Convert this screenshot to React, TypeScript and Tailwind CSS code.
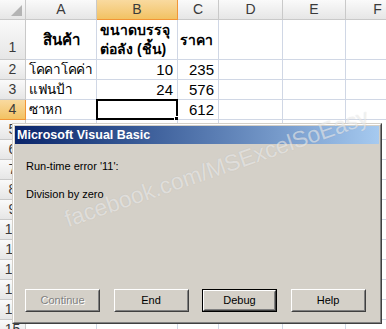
import React from "react"

const cols = ["A", "B", "C", "D", "E", "F"]

const hdr = "border-r border-b border-[#c9c9c9] bg-gradient-to-b from-[#fafafa] to-[#e6e6e6] text-[#3a3a3a]"
const hdrSel = "border-r border-b border-[#f29536] bg-gradient-to-b from-[#f9da9f] to-[#f2c262] text-[#3a3a3a]"
const cell = "border-r border-b border-[#d0d7e5] bg-white"

type Row = { n: number; cells: React.ReactNode[] }

const th = "pl-[3px] text-[13.5px] tracking-[-0.3px]"
const num = "block text-right pr-[4px] text-[15px]"

const rows: Row[] = [
    {
        n: 1,
        cells: [
            <div className="h-full flex items-center justify-center text-[15px] font-bold">สินค้า</div>,
            <div className="h-full flex flex-col justify-center pl-[3px] text-[14px] font-bold leading-[19px]">
                <span>ขนาดบรรจุ</span>
                <span>ต่อลัง (ชิ้น)</span>
            </div>,
            <div className="h-full flex items-center pl-[2px] text-[14px] font-bold">ราคา</div>,
            null, null, null,
        ],
    },
    { n: 2, cells: [<span className={th}>โคคาโคค่า</span>, <span className={num}>10</span>, <span className={num}>235</span>, null, null, null] },
    { n: 3, cells: [<span className={th}>แฟนป้า</span>, <span className={num}>24</span>, <span className={num}>576</span>, null, null, null] },
    { n: 4, cells: [<span className={th}>ซาหก</span>, null, <span className={num}>612</span>, null, null, null] },
]
for (let i = 5; i <= 15; i++) rows.push({ n: i, cells: [null, null, null, null, null, null] })

const Btn = ({ label, kind }: { label: string; kind?: "disabled" | "default" }) => (
    <div className={`w-[75px] h-[23px] ${kind === "default" ? "border border-black" : ""}`}>
        <div className="h-full border border-t-white border-l-white border-r-[#404040] border-b-[#404040]">
            <div className="h-full flex items-center justify-center border border-t-[#d4d0c8] border-l-[#d4d0c8] border-r-[#808080] border-b-[#808080]">
                {kind === "disabled" ? (
                    <span className="text-[#808080] [text-shadow:1px_1px_0_#ffffff]">{label}</span>
                ) : (
                    <span className="text-black">{label}</span>
                )}
            </div>
        </div>
    </div>
)

export default function App() {
    return (
        <div className="relative w-[386px] h-[329px] overflow-hidden bg-white font-['Tahoma','Liberation_Sans',sans-serif]">
            <div className="grid grid-cols-[26px_71px_81px_41px_64px_63px_64px] grid-rows-[20px_40px_repeat(14,20px)] text-black">
                <div className={`${hdr} relative`}>
                    <svg className="absolute right-[3px] bottom-[3px]" width="11" height="11" viewBox="0 0 11 11">
                        <polygon points="11,0 11,11 0,11" fill="#b4b4b4" />
                    </svg>
                </div>
                {cols.map((c) => (
                    <div key={c} className={`${c === "B" ? hdrSel : hdr} flex items-center justify-center text-[14px]`}>
                        {c}
                    </div>
                ))}
                {rows.map((r) => (
                    <React.Fragment key={r.n}>
                        <div className={`${r.n === 4 ? hdrSel : hdr} flex justify-center ${r.n === 1 ? "items-end pb-[1px]" : "items-center"} text-[14px]`}>
                            {r.n}
                        </div>
                        {r.cells.map((c, i) => (
                            <div key={i} className={`${cell} relative flex flex-col justify-center whitespace-nowrap leading-[18px]`}>
                                {c}
                                {r.n === 4 && i === 1 && (
                                    <div className="absolute -left-[1px] -top-[1px] w-[82px] h-[21px] border-2 border-black">
                                        <div className="absolute -right-[4px] -bottom-[4px] w-[6px] h-[6px] bg-black border border-white" />
                                    </div>
                                )}
                            </div>
                        ))}
                    </React.Fragment>
                ))}
            </div>

            {/* error dialog */}
            <div className="absolute left-[12px] top-[123px] w-[370px] h-[201px] border border-t-[#d4d0c8] border-l-[#d4d0c8] border-r-[#404040] border-b-[#404040]">
                <div className="h-full flex flex-col bg-[#d4d0c8] border border-t-white border-l-white border-r-[#808080] border-b-[#808080] p-[1px] font-['Liberation_Sans',sans-serif]">
                    <div className="h-[18px] flex items-center pl-[2px] bg-gradient-to-r from-[#0a246a] to-[#a6caf0] text-white font-bold text-[12.5px]">
                        Microsoft Visual Basic
                    </div>
                    <div className="pl-[11px] pt-[16px] text-[11px] text-black leading-[13px]">
                        <p>Run-time error '11':</p>
                        <p className="mt-[15px]">Division by zero</p>
                    </div>
                    <div className="flex-1" />
                    <div className="flex gap-[13.5px] pl-[10px] pb-[9px] text-[11px]">
                        <Btn label="Continue" kind="disabled" />
                        <Btn label="End" />
                        <Btn label="Debug" kind="default" />
                        <Btn label="Help" />
                    </div>
                </div>
            </div>

            {/* watermark */}
            <div className="absolute left-[70px] top-[205px] origin-[0_100%] -rotate-[19deg] whitespace-nowrap text-[23px] leading-[28px] text-white/55 [text-shadow:0_0_1px_rgba(0,0,0,0.15)] font-['Liberation_Sans',sans-serif] pointer-events-none">
                facebook.com/MSExcelSoEasy
            </div>
        </div>
    )
}
